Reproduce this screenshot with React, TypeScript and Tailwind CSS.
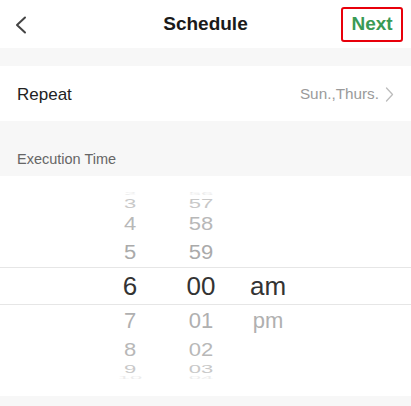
import React from "react";

type Row = {
  h: number;
  a: string;
  b: string;
  c?: string;
  scale: number;
  color: string;
  size: number;
};

const rows: Row[] = [
  { h: 7, a: "2", b: "56", scale: 0.2, color: "#ececec", size: 22 },
  { h: 13, a: "3", b: "57", scale: 0.55, color: "#c8c8c8", size: 22 },
  { h: 27, a: "4", b: "58", scale: 0.82, color: "#b8b8b8", size: 22 },
  { h: 30, a: "5", b: "59", scale: 0.95, color: "#aaaaaa", size: 22 },
];
const rowsBelow: Row[] = [
  { h: 31, a: "7", b: "01", c: "pm", scale: 0.97, color: "#b0b0b0", size: 22 },
  { h: 27, a: "8", b: "02", scale: 0.82, color: "#b8b8b8", size: 22 },
  { h: 12, a: "9", b: "03", scale: 0.5, color: "#c8c8c8", size: 22 },
  { h: 6, a: "10", b: "04", scale: 0.2, color: "#ececec", size: 22 },
];

function PickerRow({ r }: { r: Row }) {
  return (
    <div
      className="flex items-center overflow-hidden pl-[95px]"
      style={{ height: r.h, color: r.color, fontSize: r.size }}
    >
      <div className="flex w-[70px] justify-center leading-none" style={{ transform: `scaleY(${r.scale})` }}>
        {r.a}
      </div>
      <div className="flex w-[72px] justify-center leading-none" style={{ transform: `scaleY(${r.scale})` }}>
        {r.b}
      </div>
      <div className="flex w-[62px] justify-center leading-none" style={{ transform: `scaleY(${r.scale})` }}>
        {r.c ?? ""}
      </div>
    </div>
  );
}

export default function App() {
  return (
    <div
      className="h-[406px] w-[411px] overflow-hidden bg-[#f7f7f7]"
      style={{ fontFamily: '"Liberation Sans", Arial, sans-serif' }}
    >
      {/* Header */}
      <div className="relative flex h-[48px] items-center justify-center bg-white">
        <svg className="absolute left-[14px] top-[16px]" width="14" height="18" viewBox="0 0 14 18">
          <path d="M11 1.5 L3 9 L11 16.5" fill="none" stroke="#444" strokeWidth="2" strokeLinecap="round" strokeLinejoin="round" />
        </svg>
        <div className="pt-[1px] text-[19px] font-bold text-[#1a1a1a]">Schedule</div>
        <div className="absolute left-[341px] top-[7px] flex h-[35px] w-[62px] items-center justify-center rounded-[3px] border-2 border-[#e8000b]">
          <span className="text-[19px] font-bold text-[#3a9a55]">Next</span>
        </div>
      </div>

      <div className="h-[18px]" />

      {/* Repeat row */}
      <div className="flex h-[55px] items-center justify-between bg-white pl-[17px] pr-[17px] pt-[2px]">
        <span className="text-[17px] text-[#222]">Repeat</span>
        <div className="flex items-center gap-[6px]">
          <span className="text-[15.3px] text-[#9a9a9a]">Sun.,Thurs.</span>
          <svg width="9" height="15" viewBox="0 0 9 15">
            <path d="M1.5 1 L7.5 7.5 L1.5 14" fill="none" stroke="#bcbcbc" strokeWidth="1.3" strokeLinecap="round" strokeLinejoin="round" />
          </svg>
        </div>
      </div>

      {/* Execution time label */}
      <div className="flex h-[55px] items-end pb-[5px] pl-[17px]">
        <span className="text-[14.5px] text-[#666]">Execution Time</span>
      </div>

      {/* Picker */}
      <div className="flex h-[220px] flex-col bg-white pt-[14px]">
        {rows.map((r, i) => (
          <PickerRow key={i} r={r} />
        ))}
        <div className="flex h-[38px] items-center border-y border-[#e6e6e6] pl-[95px] text-[26px] leading-none text-[#333]">
          <div className="flex w-[70px] justify-center">6</div>
          <div className="flex w-[72px] justify-center">00</div>
          <div className="flex w-[62px] justify-center">am</div>
        </div>
        {rowsBelow.map((r, i) => (
          <PickerRow key={i} r={r} />
        ))}
      </div>
    </div>
  );
}
